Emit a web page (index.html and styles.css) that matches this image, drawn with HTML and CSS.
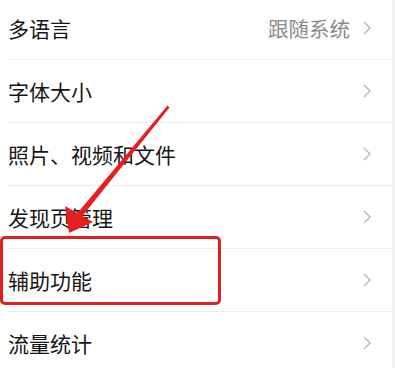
FILE: index.html
```html
<!DOCTYPE html>
<html lang="zh-CN">
<head>
    <meta charset="UTF-8">
    <meta name="viewport" content="width=device-width, initial-scale=1.0">
    <title>设置 - 通用</title>
    <link rel="stylesheet" href="styles.css">
</head>
<body>

    <div class="settings">
        <div class="row">
            <span class="label">多语言</span>
            <span class="value">跟随系统</span>
            <svg class="chevron" viewBox="0 0 10 16"><path d="M2 2 L8 8 L2 14"/></svg>
        </div>
        <div class="row">
            <span class="label">字体大小</span>
            <svg class="chevron" viewBox="0 0 10 16"><path d="M2 2 L8 8 L2 14"/></svg>
        </div>
        <div class="row">
            <span class="label">照片、视频和文件</span>
            <svg class="chevron" viewBox="0 0 10 16"><path d="M2 2 L8 8 L2 14"/></svg>
        </div>
        <div class="row">
            <span class="label">发现页管理</span>
            <svg class="chevron" viewBox="0 0 10 16"><path d="M2 2 L8 8 L2 14"/></svg>
        </div>
        <div class="row">
            <span class="label">辅助功能</span>
            <svg class="chevron" viewBox="0 0 10 16"><path d="M2 2 L8 8 L2 14"/></svg>
        </div>
        <div class="row">
            <span class="label">流量统计</span>
            <svg class="chevron" viewBox="0 0 10 16"><path d="M2 2 L8 8 L2 14"/></svg>
        </div>

        <!-- 标注 -->
        <div class="highlight"></div>
        <svg class="arrow" viewBox="0 0 395 368">
            <path d="M167.5 105.5 L169.5 107.5 L82 216.5 L77.5 213 Z"/>
            <path d="M69 233 L65 206 L93 222 Z"/>
        </svg>
    </div>

</body>
</html>
```

FILE: styles.css
```css
body {
    margin: 0;
    padding: 0;
    background-color: #f2f2f2;
    font-family: "Noto Sans CJK SC", "Noto Sans", sans-serif;
    overflow: hidden;
}
.settings {
    position: relative;
    width: 392px;
    margin-top: -3px;
    background-color: #fff;
}
.row {
    display: flex;
    align-items: center;
    height: 62px;
    margin-left: 8px;
    padding-right: 20px;
    border-bottom: 1px solid #ececec;
}
.label {
    flex: 1;
    font-size: 21px;
    color: #161616;
}
.value {
    font-size: 20.5px;
    color: #8a8a8a;
    margin-right: 12px;
}
.chevron {
    width: 10px;
    height: 16px;
    fill: none;
    stroke: #b4b4b4;
    stroke-width: 1.4;
}
.highlight {
    position: absolute;
    left: 0;
    top: 239px;
    width: 215px;
    height: 63px;
    border: 3px solid #e3201f;
    border-radius: 5px;
}
.arrow {
    position: absolute;
    left: 0;
    top: 3px;
    width: 395px;
    height: 368px;
    fill: #e3201f;
}
```
